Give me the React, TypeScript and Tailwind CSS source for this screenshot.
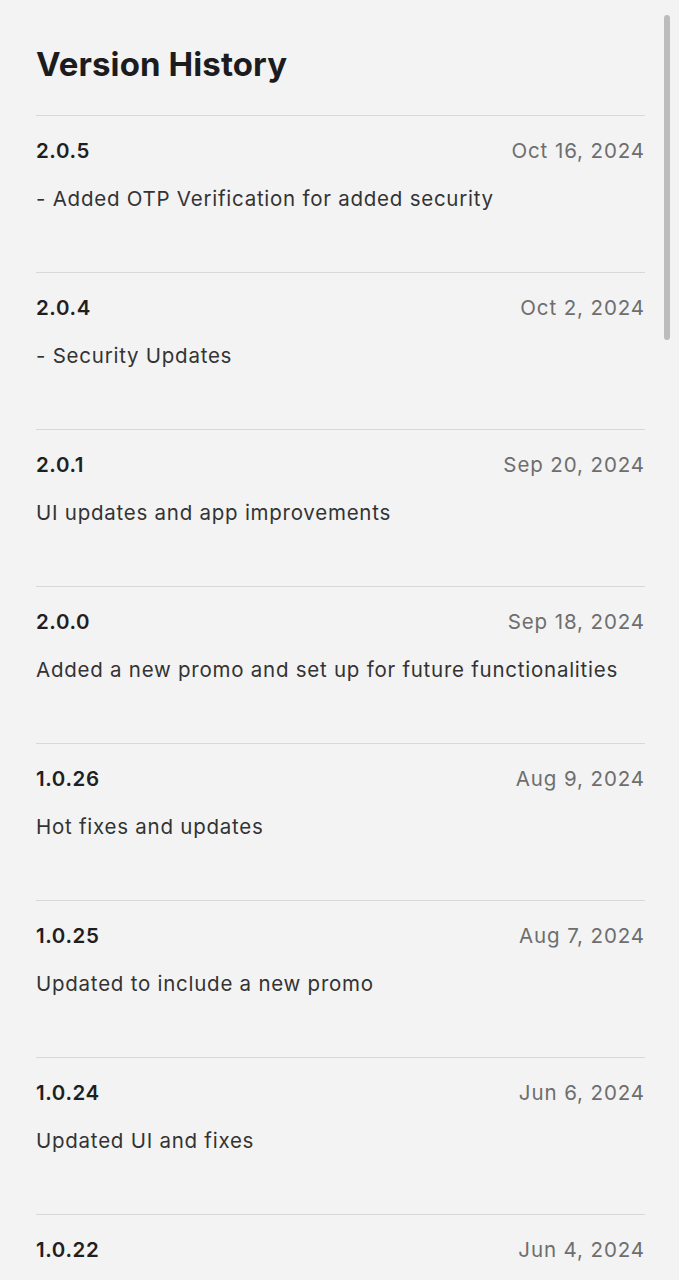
import React from "react";

const items = [
  { v: "2.0.5", d: "Oct 16, 2024", t: "- Added OTP Verification for added security" },
  { v: "2.0.4", d: "Oct 2, 2024", t: "- Security Updates" },
  { v: "2.0.1", d: "Sep 20, 2024", t: "UI updates and app improvements" },
  { v: "2.0.0", d: "Sep 18, 2024", t: "Added a new promo and set up for future functionalities" },
  { v: "1.0.26", d: "Aug 9, 2024", t: "Hot fixes and updates" },
  { v: "1.0.25", d: "Aug 7, 2024", t: "Updated to include a new promo" },
  { v: "1.0.24", d: "Jun 6, 2024", t: "Updated UI and fixes" },
  { v: "1.0.22", d: "Jun 4, 2024", t: "" },
];

export default function App() {
  return (
    <div
      className="relative h-[1280px] w-full overflow-hidden bg-[#f3f3f3] pl-[36px] pr-[34px] pt-[44px]"
      style={{ fontFamily: "Inter, 'Noto Sans', sans-serif" }}
    >
      <h1 className="text-[33px] font-bold leading-[40px] tracking-[0.1px] text-[#1c1c1e]">Version History</h1>
      <div className="mt-[31px]">
        {items.map((it) => (
          <div key={it.v} className="h-[157px] border-t border-[#d8d8d8] pt-[23px]">
            <div className="flex items-center justify-between leading-[24px]">
              <span className="text-[20.5px] font-semibold tracking-[0.6px] text-[#1f1f1f]">{it.v}</span>
              <span className="text-[20.5px] tracking-[0.9px] text-[#6e6e6e]">{it.d}</span>
            </div>
            {it.t && (
              <p className="mt-[24px] text-[20.5px] leading-[24px] tracking-[0.75px] text-[#333333]">{it.t}</p>
            )}
          </div>
        ))}
      </div>
      <div className="absolute right-[9px] top-[15px] h-[325px] w-[6px] rounded-full bg-[#bcbcbc]" />
    </div>
  );
}
